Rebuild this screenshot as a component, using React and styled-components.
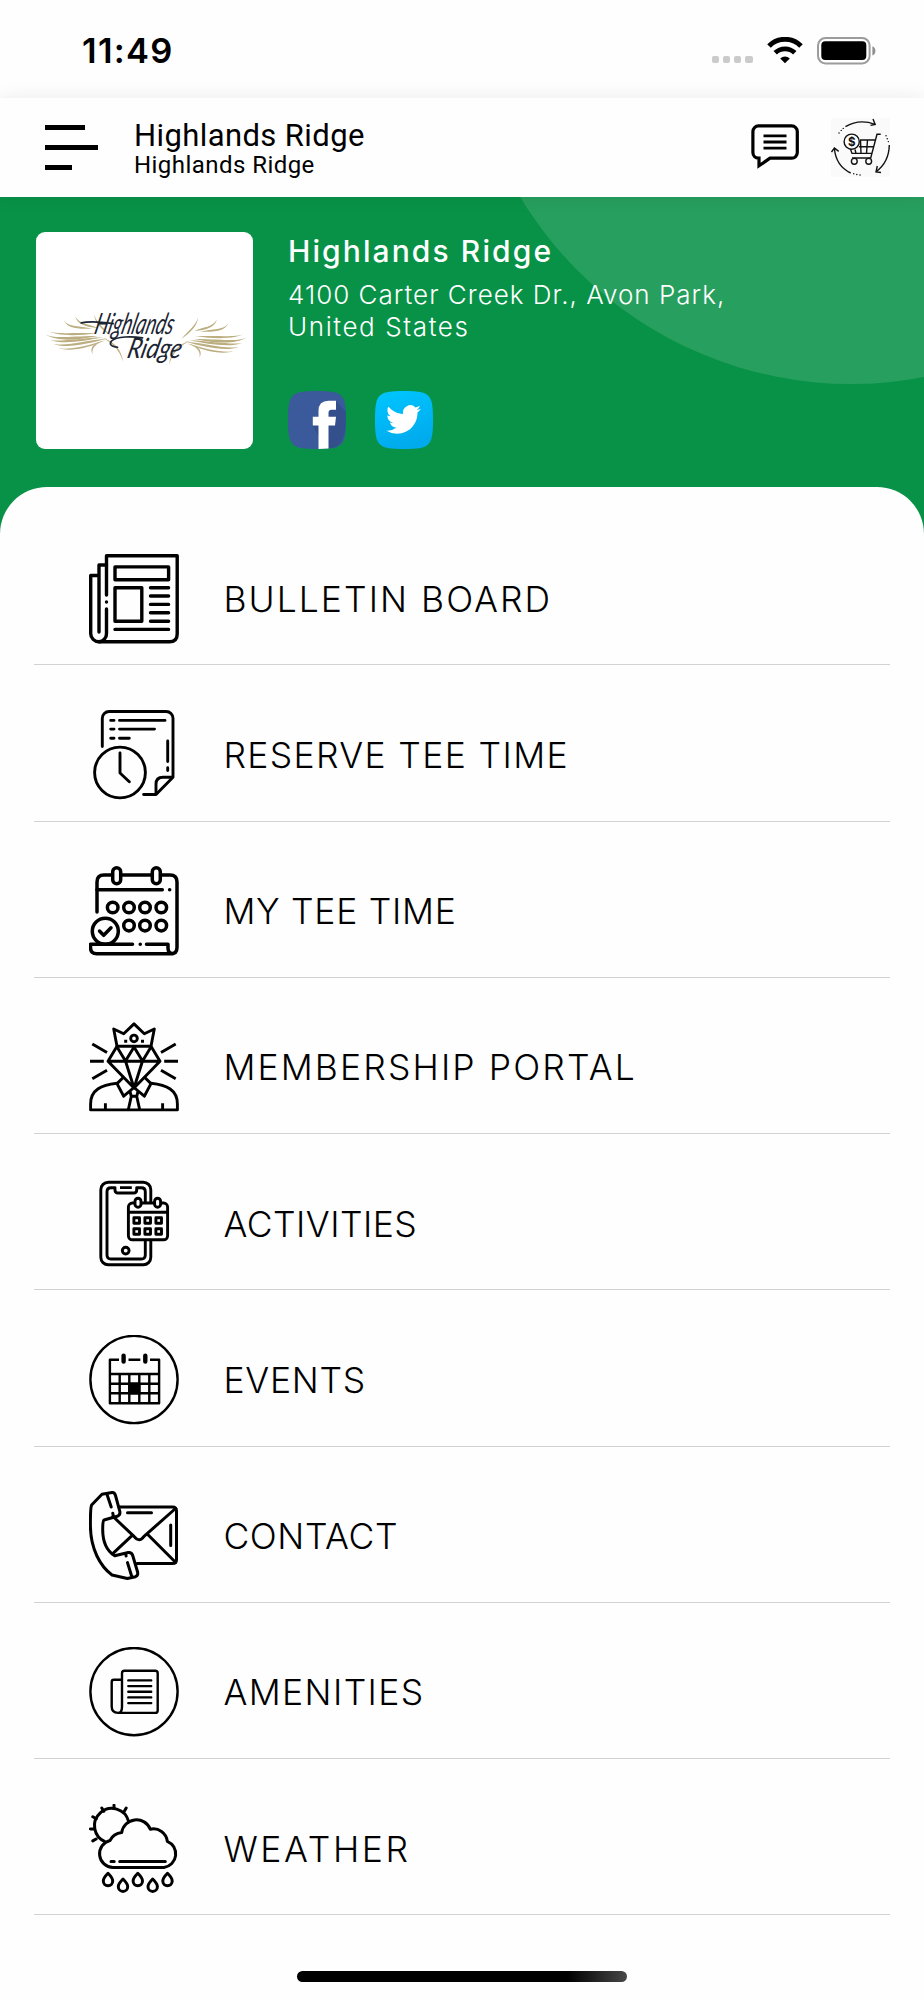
import React from 'react'
import styled, { createGlobalStyle } from 'styled-components'

const items = [
  { label: 'BULLETIN BOARD', icon: BulletinIcon, spacing: 2.05 },
  { label: 'RESERVE TEE TIME', icon: ReserveIcon, spacing: 1.35 },
  { label: 'MY TEE TIME', icon: TeeTimeIcon, spacing: 0.7 },
  { label: 'MEMBERSHIP PORTAL', icon: MemberIcon, spacing: 2.13 },
  { label: 'ACTIVITIES', icon: ActivitiesIcon, spacing: 0.45 },
  { label: 'EVENTS', icon: EventsIcon, spacing: 0.75 },
  { label: 'CONTACT', icon: ContactIcon, spacing: 0.6 },
  { label: 'AMENITIES', icon: AmenitiesIcon, spacing: 1.4 },
  { label: 'WEATHER', icon: WeatherIcon, spacing: 2.65 },
]

function App() {
  return (
    <Screen>
      <GlobalStyle />

      <StatusBar>
        <Time>11:49</Time>
        <StatusIcons>
          <Signal><i /><i /><i /><i /></Signal>
          <WifiIcon />
          <BatteryIcon />
        </StatusIcons>
      </StatusBar>

      <AppBar>
        <Burger>
          <BurgerLine $width={40} />
          <BurgerLine $width={53.5} />
          <BurgerLine $width={27} />
        </Burger>
        <Titles>
          <Title>Highlands Ridge</Title>
          <SubTitle>Highlands Ridge</SubTitle>
        </Titles>
        <ChatIcon />
        <CartIcon />
      </AppBar>

      <Hero>
        <HeroCircle />
        <LogoCard>
          <ClubLogo />
        </LogoCard>
        <HeroInfo>
          <ClubName>Highlands Ridge</ClubName>
          <Address>
            <AddressLine $spacing={1}>4100 Carter Creek Dr., Avon Park,</AddressLine>
            <AddressLine $spacing={1.6}>United States</AddressLine>
          </Address>
          <Socials>
            <FacebookIcon />
            <TwitterIcon />
          </Socials>
        </HeroInfo>
      </Hero>

      <Panel>
        <Menu>
          {items.map(({ label, icon: Icon, spacing }) => (
            <MenuItem key={label}>
              <Icon />
              <Label $spacing={spacing}>{label}</Label>
            </MenuItem>
          ))}
        </Menu>
        <HomeIndicator />
      </Panel>
    </Screen>
  )
}

export default App

/* icons */

function BulletinIcon() {
  return (
    <LineIcon viewBox="0 0 90 90">
      <path d="M17.5 41V1.7H88.2V80q0 7.8-7.8 7.8H10" strokeLinecap="round" />
      <path d="M17.5 11H10V78M10 21.5H1.7V79.5a8.3 8.3 0 0 0 8.3 8.3a8 8 0 0 0 7.5-8.3V55" strokeLinecap="round" />
      <path d="M17.5 48v.1" strokeLinecap="round" />
      <path d="M26 12.9H79.6V25.7H26ZM26 33.8H52.8V67.3H26Z" />
      <path d="M61.5 33.8H79.6M61.5 42H79.6M61.5 50.4H79.6M61.5 58.8H79.6M61.5 67.2H79.6M26 75.4H79.6" strokeLinecap="round" />
    </LineIcon>
  )
}

function ReserveIcon() {
  return (
    <LineIcon viewBox="0 0 90 90" $stroke={2.9}>
      <path d="M13.3 36.5V8.3a6.8 6.8 0 0 1 6.8-6.8H77.2a6.8 6.8 0 0 1 6.8 6.8V67.3L67 84.5H54.6" strokeLinecap="round" />
      <path d="M84 67.3H74q-7 0-7 7V84.5" />
      <path d="M78.7 31V51.5M78.7 57.7V60.5M21.7 10.4H25M30.5 10.4H76M21.7 19.1H25M30.5 19.1H65.5M21.7 28.2H25M30.5 28.2H40.3" strokeLinecap="round" />
      <circle cx="31" cy="62.5" r="25.4" />
      <path d="M31 43V63L40.3 71.7" strokeLinecap="round" />
    </LineIcon>
  )
}

function TeeTimeIcon() {
  return (
    <LineIcon viewBox="0 0 90 90" $stroke={3.5}>
      <path d="M8 46V16q0-7 7-7H23.5M32 9H63M71.5 9H81q7 0 7 7V81.5q0 6.3-6.3 6.3H7.8q-6.3 0-6.3-6.3V78.2H43.5M57.5 78.2H79V82q0 5.8 5 5.8M51.2 78.2h.1" strokeLinecap="round" />
      <rect x="23.7" y="1.8" width="8" height="16" rx="4" />
      <rect x="63.3" y="1.8" width="8" height="16" rx="4" />
      <path d="M8 23.8H73.3M80.6 23.8h.1" strokeLinecap="round" />
      {[23.7, 40, 56, 72.3].map(x => <circle key={x} cx={x} cy="41.5" r="5.3" />)}
      {[40, 56, 72.3].map(x => <circle key={x} cx={x} cy="59.6" r="5.3" />)}
      <circle cx="16.3" cy="65.2" r="13" />
      <path d="M10.5 65L14.7 69.3L22 61.8" strokeLinecap="round" />
    </LineIcon>
  )
}

function MemberIcon() {
  return (
    <LineIcon viewBox="0 0 90 90" $stroke={2.9}>
      <path d="M28 24.2L24.7 7L34.7 11.8L45 1.9L55.3 11.8L65.3 7L62 24.2Z" />
      <circle cx="45" cy="16.4" r="3.3" />
      <path d="M35.2 19.3h3M52 19.3h3M3.3 22L18 30.6M86.7 22L72 30.6M1 39.3H14.8M75.2 39.3H89M3.3 56.8L18 48.3M86.7 56.8L72 48.3" />
      <path d="M28 24.2L19 39.2L45 66L71 39.2L62 24.2M19 39.2H71M28 25L36.5 39L45 25L53.5 39L62 25M36.5 39L45 66L53.5 39" />
      <path d="M35 54.8L28 61.6L34.7 74.2L45 65.5L55.3 74.2L62 61.6L55 54.8" />
      <path d="M41 69.5L42.3 74.3H47.7L49 69.5M42.3 74.3L39.3 87.7M47.7 74.3L50.7 87.7" />
      <path d="M28 61.3C12 63 1.6 68 1.6 82V87.9H88.4V82C88.4 68 78 63 62 61.3M16.4 81.3V87.9M73.6 81.3V87.9" />
    </LineIcon>
  )
}

function ActivitiesIcon() {
  return (
    <LineIcon viewBox="0 0 90 90" $stroke={2.9}>
      <rect x="11.8" y="3.2" width="50" height="82.6" rx="7.5" />
      <path d="M26 8.7H22q-4 0-4 4V76q0 4 4 4H52.3q4 0 4-4V12.7q0-4-4-4H47.7V11q0 3-3 3H29q-3 0-3-3ZM31 8.6H42.8" />
      <circle cx="36.7" cy="71.6" r="3.4" />
      <rect x="39.4" y="24" width="39.2" height="36.8" rx="4" fill="#fefefe" />
      <path d="M39.4 33.2H78.6" />
      <rect x="46" y="19.2" width="6" height="9" rx="3" fill="#fefefe" />
      <rect x="65.6" y="19.2" width="6" height="9" rx="3" fill="#fefefe" />
      {[38.7, 49.7].map(y => [44.9, 55.9, 66.9].map(x => (
        <rect key={x + '-' + y} x={x} y={y} width="5.6" height="5.6" />
      )))}
    </LineIcon>
  )
}

function EventsIcon() {
  return (
    <LineIcon viewBox="0 0 90 90" $stroke={2.4}>
      <circle cx="45" cy="44.5" r="43.6" />
      <path d="M30 24.8H20.9V68.3H70.1V24.8H61M39.5 24.8H51.3M20.9 39H70.1M20.9 48.7H70.1M20.9 58.3H70.1M30.7 39V68.3M40.3 39V68.3M50.3 39V68.3M60.3 39V68.3" />
      <path d="M40.3 48.7h10v9.6h-10Z" fill="#000" />
      <path d="M34.6 20.8V26.5M56.3 20.8V26.5" strokeWidth="4.4" strokeLinecap="round" />
    </LineIcon>
  )
}

function ContactIcon() {
  return (
    <LineIcon viewBox="0 0 90 90" $stroke={3} strokeLinecap="round">
      <path d="M30 16.1H83.5q4 0 4 4V68.5q0 4-4 4H48" />
      <path d="M86.5 17.5L55 45.4Q50.3 52 45 45.4L24 25.5M59 43.8L86.5 71.3M42.7 44.8L23.5 62.8" />
      <path d="M38.5 21.8H62.5M81.7 34V54.5" />
      <path d="M23 1.6L13 3.2L2.6 14Q1.3 17 1.4 35C1.7 58 11 75 23 84L38.3 87.5L46.5 85.7Q49.3 84.5 48.6 81L43.7 64.5Q42.7 61.2 39.3 61.5L25.7 64.8C18 60 13.6 50 13.7 38Q13.7 29.2 15 29L28.3 25.3Q31.5 24 30.8 20.4L26.5 4.5Q25.5 1.2 23 1.6Z" />
      <path d="M18.2 4L22.2 16M23.8 22.2L24.4 25.5M36.6 62.6L37.1 65M38.5 71.6L42.6 85" />
    </LineIcon>
  )
}

function AmenitiesIcon() {
  return (
    <LineIcon viewBox="0 0 90 90" $stroke={2.4}>
      <circle cx="45" cy="44.6" r="43.6" />
      <path d="M33 60V26.3q0-2.5 2.5-2.5H66.2q2.5 0 2.5 2.5V63.4q0 2.5-2.5 2.5H29q-6.3 0-6.3-6.3V35q0-2.2 2.2-2.2H33M33 60q0 5.9-4 5.9" />
      <path d="M39.3 33.4H62.2M39.3 39.1H62.2M39.3 44.8H62.2M39.3 50.4H62.2M39.3 56.1H62.2" strokeLinecap="round" />
    </LineIcon>
  )
}

function WeatherIcon() {
  return (
    <LineIcon viewBox="0 0 90 90" $stroke={3}>
      <path d="M16.4 37.8A17.3 17.3 0 1 1 39.5 17.2" />
      <path d="M25 1.2V4.6M12.8 4L14.8 7.3M37.2 4L35.3 7.3M3.8 12.8L7.3 14.8M1.4 24.9H4.8M3.8 36.9L7.1 35" strokeLinecap="round" />
      <path d="M24 63.5A13.7 13.7 0 0 1 21 36.5Q24.5 29.5 32.7 28.6A14.9 14.9 0 0 1 61.3 25.2A14 14 0 0 1 78.3 37.3A13.7 13.7 0 0 1 75 63.5Z" />
      <path d="M22 57.6H25.2M30.7 57.6H76.3" strokeLinecap="round" />
      {[[19, 69.3], [34, 75], [48.8, 69.3], [63.7, 75], [78.5, 69.3]].map(([x, y]) => (
        <path key={x} d={`M${x} ${y}c-3 3-4.7 6-4.7 7.7a4.7 4.7 0 0 0 9.4 0c0-1.7-1.7-4.7-4.7-7.7Z`} />
      ))}
    </LineIcon>
  )
}

function WifiIcon() {
  return (
    <WifiSvg viewBox="0 0 36 27">
      <path d="M2 9A22.5 22.5 0 0 1 34 9" strokeWidth="5" />
      <path d="M8.2 15.8A14 14 0 0 1 27.8 15.8" strokeWidth="4.8" />
      <path d="M18 26.3L13.2 21.5A7 7 0 0 1 22.8 21.5Z" fill="#000" stroke="none" />
    </WifiSvg>
  )
}

function BatteryIcon() {
  return (
    <BatterySvg viewBox="0 0 60 28">
      <rect x="1" y="1" width="51.6" height="25.4" rx="7.5" fill="none" stroke="#9c9c9c" strokeWidth="2" />
      <rect x="4.3" y="4.3" width="45" height="18.8" rx="4" fill="#000" />
      <path d="M55.4 9.3q3 1.2 3 4.6t-3 4.6Z" fill="#8f8f8f" />
    </BatterySvg>
  )
}

function ChatIcon() {
  return (
    <ChatSvg viewBox="0 0 48 46">
      <path d="M7.5 1.9H40.7a5.6 5.6 0 0 1 5.6 5.6V28.6a5.6 5.6 0 0 1-5.6 5.6H19L8 41.8V34.2H7.5a5.6 5.6 0 0 1-5.6-5.6V7.5a5.6 5.6 0 0 1 5.6-5.6Z" />
      <path d="M12.5 11.8H35.5M12.5 18H35.5M12.5 24.1H35.5" strokeWidth="2.8" />
    </ChatSvg>
  )
}

function CartIcon() {
  return (
    <CartSvg viewBox="0 0 59 59">
      <path d="M14.5 8.7Q28 .5 44 6.3M42 1L44.2 6.4L39.5 7.4M58.3 27Q58 44 45.3 53.5M46.3 48L45 54L50 54.5M3.4 30.5Q5 48 19.7 55M.5 34L3.4 30L7.7 33.4" />
      <path d="M49.7 16.3H46L39.7 40H21M29 22H44M28 28.7H42.5M19 30L21 35.4H41M29.5 22L30 35.4M36.5 22L35.5 35.4M24 31.5L25 35.4" />
      <circle cx="20.7" cy="23.7" r="7.6" fill="#fff" />
      <circle cx="23.3" cy="43.3" r="2.9" />
      <circle cx="37.7" cy="43.3" r="2.9" />
      <path d="M8 15h.1M10.2 12.4h.1M12.2 10.4h.1M55 17.7h.1M56.2 20.8h.1M57.3 23.6h.1M22.7 55.7h.1M25.8 56.5h.1M29 57h.1" strokeLinecap="round" />
      <text x="20.7" y="27.9" textAnchor="middle">$</text>
    </CartSvg>
  )
}

// one side of the wings, mirrored for the other
const feathers = [
  'M33 296C55 309 100 301 182 304C120 313 60 312 33 296Z',
  'M28 308C60 323 110 311 186 312C120 325 65 330 28 308Z',
  'M41 324C75 330 130 319 200 316C145 328 80 338 41 324Z',
  'M53 336C95 343 150 326 215 320C160 335 90 351 53 336Z',
  'M69 350C110 353 160 341 205 325C165 347 105 360 69 350Z',
  'M84 266C98 286 130 282 168 290C125 293 92 288 84 266Z',
  'M118 254C130 278 160 276 185 288C150 287 122 276 118 254Z',
  'M174 248C184 276 205 288 224 312C198 293 178 276 174 248Z',
  'M170 368C158 345 178 330 210 326C180 334 166 348 170 368Z',
  'M196 316C235 328 256 352 262 390C250 354 232 334 196 316Z',
]

function ClubLogo() {
  return (
    <LogoSvg viewBox="0 0 650 650">
      <g fill="#bcae80">
        {feathers.map(d => <path key={d} d={d} />)}
      </g>
      <g fill="#bcae80" transform="translate(661 9) scale(-1 1)">
        {feathers.map(d => <path key={d} d={d} />)}
      </g>
      <path d="M136 273Q165 266 232 275M245 346Q216 343 226 328C242 312 290 313 320 318" />
      <text transform="translate(172 306) skewX(-14)" fontSize="88" textLength="236" lengthAdjust="spacingAndGlyphs">Highlands</text>
      <text transform="translate(270 379) skewX(-14)" fontSize="84" textLength="162" lengthAdjust="spacingAndGlyphs">Ridge</text>
    </LogoSvg>
  )
}

function FacebookIcon() {
  return (
    <SocialSvg viewBox="0 0 58 58">
      <path d="M0 29C0 3 3 0 29 0S58 3 58 29S55 58 29 58S0 55 0 29Z" fill="#3a5a9b" />
      <path d="M48 10L57.5 20Q60 53 45 57H38L24 34Z" fill="#34508c" />
      <path d="M30.5 58V34.5H24.8V25.7H30.5V20Q30.5 9.7 40.5 9.7H48V18.7H43.5Q40.5 18.7 40.5 21.8V25.7H48L47 34.5H40.5V57.6Z" fill="#fff" />
    </SocialSvg>
  )
}

function TwitterIcon() {
  return (
    <SocialSvg viewBox="0 0 58 58">
      <defs>
        <linearGradient id="sky" x1="0" y1="0" x2=".3" y2="1">
          <stop offset="0" stopColor="#00c6ff" />
          <stop offset="1" stopColor="#00abed" />
        </linearGradient>
      </defs>
      <path d="M0 29C0 3 3 0 29 0S58 3 58 29S55 58 29 58S0 55 0 29Z" fill="url(#sky)" />
      <path transform="translate(11 11) scale(1.46)" fill="#fff" d="M23.95 4.57a10 10 0 0 1-2.82.78 4.96 4.96 0 0 0 2.16-2.73c-.95.56-2 .96-3.13 1.18a4.92 4.92 0 0 0-8.38 4.48C7.69 8.1 4.07 6.13 1.64 3.16a4.82 4.82 0 0 0-.67 2.48c0 1.71.87 3.21 2.19 4.1a4.9 4.9 0 0 1-2.23-.62v.06a4.92 4.92 0 0 0 3.95 4.83 5 5 0 0 1-2.21.08 4.94 4.94 0 0 0 4.6 3.42A9.87 9.87 0 0 1 0 19.54a13.99 13.99 0 0 0 7.56 2.21c9.05 0 14-7.5 14-13.98 0-.21 0-.42-.02-.63a9.94 9.94 0 0 0 2.41-2.57z" />
    </SocialSvg>
  )
}

/* styles */

const GlobalStyle = createGlobalStyle`
  * {
    box-sizing: border-box;
  }
  body {
    margin: 0;
    background: #fefefe;
  }
`

const Screen = styled.div`
  width: 924px;
  height: 2000px;
  overflow: hidden;
  background: #fefefe;
  color: #000;
  font-family: Inter, 'Liberation Sans', sans-serif;
`

const StatusBar = styled.div`
  height: 98px;
  display: flex;
  justify-content: space-between;
  padding: 0 47px 0 82px;
`

const Time = styled.div`
  padding-top: 34px;
  font-size: 34.5px;
  line-height: 34px;
  font-weight: 600;
  letter-spacing: 1.3px;
`

const StatusIcons = styled.div`
  display: flex;
  align-items: flex-start;
  padding-top: 36.5px;
`

const Signal = styled.div`
  display: flex;
  gap: 3.6px;
  padding-top: 19px;
  margin-right: 14.5px;

  i {
    width: 7.5px;
    height: 7.5px;
    border-radius: 2px;
    background: #cbcbcb;
  }
`

const WifiSvg = styled.svg`
  width: 36px;
  height: 27px;
  margin-right: 14px;
  fill: none;
  stroke: #000;
`

const BatterySvg = styled.svg`
  width: 60px;
  height: 28px;
`

const AppBar = styled.header`
  position: relative;
  z-index: 1;
  height: 98.5px;
  display: flex;
  align-items: flex-start;
  padding: 0 34px 0 44.7px;
  background: #fefefe;
  box-shadow: 0 0 18px rgba(0, 0, 0, 0.08);
`

const Burger = styled.div`
  width: 89.3px;
  display: flex;
  flex-direction: column;
  gap: 15px;
  padding-top: 27.3px;
`

const BurgerLine = styled.span`
  width: ${props => props.$width}px;
  height: 5px;
  background: #000;
`

const Titles = styled.div`
  flex: 1;
  padding-top: 22.5px;
  font-family: Roboto, 'Liberation Sans', sans-serif;
`

const Title = styled.div`
  font-size: 31px;
  line-height: 30px;
  letter-spacing: 0.4px;
`

const SubTitle = styled.div`
  font-size: 24px;
  line-height: 28.8px;
  letter-spacing: 0.45px;
`

const ChatSvg = styled.svg`
  width: 48px;
  height: 46px;
  margin: 26.3px 32px 0 0;
  fill: none;
  stroke: #000;
  stroke-width: 3.2;
`

const CartSvg = styled.svg`
  width: 59px;
  height: 59px;
  margin-top: 20px;
  background: #fafafa;
  fill: none;
  stroke: #111;
  stroke-width: 1.4;

  text {
    font-size: 11.5px;
    font-weight: 700;
    fill: #111;
    stroke: none;
  }
`

const Hero = styled.section`
  position: relative;
  height: 337px;
  overflow: hidden;
  display: flex;
  align-items: flex-start;
  gap: 35.5px;
  padding: 35.5px 36px;
  background: #089247;
`

const HeroCircle = styled.div`
  position: absolute;
  left: 465px;
  top: -585px;
  width: 772px;
  height: 772px;
  border-radius: 50%;
  background: rgba(255, 255, 255, 0.125);
`

const LogoCard = styled.div`
  position: relative;
  width: 216.5px;
  height: 216.5px;
  border-radius: 9px;
  background: #fff;
`

const LogoSvg = styled.svg`
  display: block;
  width: 100%;
  height: 100%;

  > path {
    fill: none;
    stroke: #1b2432;
    stroke-width: 5;
    stroke-linecap: round;
  }

  text {
    font-family: Lato, 'Liberation Sans', sans-serif;
    font-style: italic;
    fill: #1b2432;
  }
`

const HeroInfo = styled.div`
  position: relative;
  height: 217px;
  display: flex;
  flex-direction: column;
  color: #fff;
`

const ClubName = styled.div`
  font-size: 30px;
  line-height: 39.5px;
  font-weight: 500;
  letter-spacing: 2.1px;
`

const Address = styled.div`
  margin-top: 7.3px;
  font-size: 26px;
  line-height: 32px;
  font-weight: 300;
`

const AddressLine = styled.div`
  letter-spacing: ${props => props.$spacing}px;
`

const Socials = styled.div`
  display: flex;
  gap: 28.5px;
  margin-top: auto;
`

const SocialSvg = styled.svg`
  width: 58px;
  height: 58px;
`

const Panel = styled.main`
  position: relative;
  margin-top: -47px;
  min-height: 1514px;
  padding: 22.5px 34px 0;
  border-radius: 47px 47px 0 0;
  background: #fefefe;
`

const Menu = styled.ul`
  margin: 0;
  padding: 0;
  list-style: none;
`

const MenuItem = styled.li`
  height: 156.25px;
  display: flex;
  align-items: flex-start;
  padding: 44.7px 0 0 55px;
  border-bottom: 1px solid #d2d2d2;
`

const Label = styled.span`
  margin-left: 44.4px;
  font-size: 35.5px;
  line-height: 91px;
  font-weight: 350;
  letter-spacing: ${props => props.$spacing}px;
  white-space: nowrap;
`

const LineIcon = styled.svg`
  width: 90px;
  height: 90px;
  flex: none;
  fill: none;
  stroke: #000;
  stroke-width: ${props => props.$stroke || 3.4};
  stroke-linejoin: round;
`

const HomeIndicator = styled.div`
  width: 330px;
  height: 11px;
  margin: 55.5px auto 0;
  border-radius: 6px;
  background: linear-gradient(90deg, #000 82%, #484848);
`
